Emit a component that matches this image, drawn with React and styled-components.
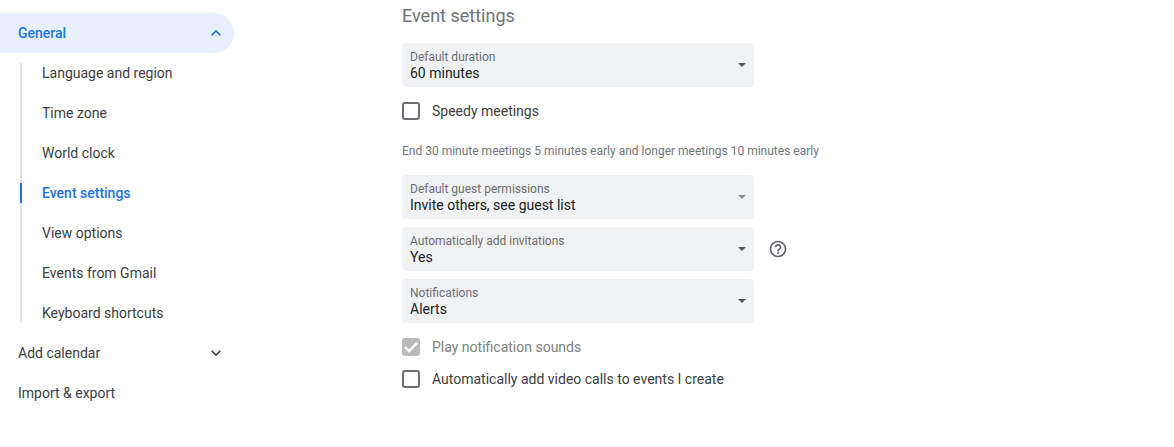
import React from 'react';
import styled, { createGlobalStyle } from 'styled-components';
import { MdExpandLess, MdExpandMore, MdHelpOutline } from 'react-icons/md';

const generalLinks = [
	'Language and region',
	'Time zone',
	'World clock',
	'Event settings',
	'View options',
	'Events from Gmail',
	'Keyboard shortcuts',
];

const SelectField = ({ id, label, options, dimArrow }) => (
	<Field>
		<FieldLabel htmlFor={id}>{label}</FieldLabel>
		<Select id={id}>
			{options.map(option => (
				<option key={option}>{option}</option>
			))}
		</Select>
		<Arrow viewBox="0 0 8 4" $dim={dimArrow} aria-hidden="true">
			<path d="M0 0h8L4 4z" />
		</Arrow>
	</Field>
);

const CheckRow = ({ id, label, ...input }) => (
	<CheckWrapper>
		<CheckBox>
			<CheckInput type="checkbox" id={id} {...input} />
			<svg viewBox="0 0 18 18" width="18" height="18" aria-hidden="true">
				<path d="M3 9.2l4 4 8-8.4" fill="none" stroke="currentColor" strokeWidth="2.4" />
			</svg>
		</CheckBox>
		<CheckLabel htmlFor={id} $disabled={input.disabled}>
			{label}
		</CheckLabel>
	</CheckWrapper>
);

const App = () => (
	<Page>
		<GlobalStyle />
		<Sidebar aria-label="Settings">
			<SectionButton type="button" aria-expanded="true" $active>
				General
				<MdExpandLess size={20} aria-hidden="true" />
			</SectionButton>
			<SubList>
				{generalLinks.map(name => (
					<li key={name}>
						<SubLink href="#" $active={name === 'Event settings'}>
							{name}
						</SubLink>
					</li>
				))}
			</SubList>
			<SectionButton type="button" aria-expanded="false">
				Add calendar
				<MdExpandMore size={20} aria-hidden="true" />
			</SectionButton>
			<SectionLink href="#">Import &amp; export</SectionLink>
		</Sidebar>
		<Main>
			<Title>Event settings</Title>
			<SelectField
				id="duration"
				label="Default duration"
				options={['60 minutes', '30 minutes', '15 minutes']}
			/>
			<CheckRow id="speedy" label="Speedy meetings" />
			<Hint>End 30 minute meetings 5 minutes early and longer meetings 10 minutes early</Hint>
			<SelectField
				id="permissions"
				label="Default guest permissions"
				options={['Invite others, see guest list', 'Modify event']}
				dimArrow
			/>
			<FieldRow>
				<SelectField
					id="invitations"
					label="Automatically add invitations"
					options={['Yes', 'No']}
				/>
				<HelpButton type="button" aria-label="Help">
					<MdHelpOutline size={20} />
				</HelpButton>
			</FieldRow>
			<SelectField id="notifications" label="Notifications" options={['Alerts', 'Off']} />
			<div>
				<CheckRow id="sounds" label="Play notification sounds" defaultChecked disabled />
				<CheckRow id="video" label="Automatically add video calls to events I create" />
			</div>
		</Main>
	</Page>
);

export default App;

const GlobalStyle = createGlobalStyle`
	* {
		box-sizing: border-box;
	}

	body {
		margin: 0;
		background: #fff;
		color: #3c4043;
		font: 14px/20px Roboto, sans-serif;
	}

	button,
	select {
		font: inherit;
		color: inherit;
	}
`;

const Page = styled.div`
	display: flex;
	gap: 168px;
`;

const Sidebar = styled.nav`
	flex: 0 0 234px;
	padding-top: 13px;
`;

const SectionButton = styled.button`
	display: flex;
	align-items: center;
	justify-content: space-between;
	width: 100%;
	height: 40px;
	padding: 0 8px 0 18px;
	border: 0;
	border-radius: 0 20px 20px 0;
	background: ${({ $active }) => ($active ? '#e8f0fe' : 'transparent')};
	color: ${({ $active }) => ($active ? '#1a73e8' : '#3c4043')};
	font-weight: ${({ $active }) => ($active ? 500 : 400)};
	cursor: pointer;
`;

const SectionLink = styled.a`
	display: block;
	padding: 10px 18px;
	color: #3c4043;
	text-decoration: none;
`;

const SubList = styled.ul`
	display: grid;
	gap: 20px;
	margin: 10px 0 10px 20px;
	padding: 0;
	list-style: none;
	box-shadow: inset 2px 0 #e4e4e4;
`;

const SubLink = styled.a`
	display: block;
	padding-left: 20px;
	border-left: 2px solid ${({ $active }) => ($active ? '#1a73e8' : 'transparent')};
	color: ${({ $active }) => ($active ? '#1a73e8' : '#3c4043')};
	font-weight: ${({ $active }) => ($active ? 500 : 400)};
	text-decoration: none;
`;

const Main = styled.main`
	display: grid;
	flex: 1;
	align-content: start;
	gap: 8px;
	padding: 3px 24px 24px 0;
`;

const Title = styled.h1`
	margin: 0 0 6px;
	color: #6f7377;
	font-size: 18px;
	font-weight: 400;
	line-height: 26px;
`;

const Field = styled.div`
	display: grid;
	width: 100%;
	max-width: 352px;

	> * {
		grid-area: 1 / 1;
	}
`;

const FieldLabel = styled.label`
	z-index: 1;
	align-self: start;
	padding: 6px 8px 0;
	color: #6b6e72;
	font-size: 12px;
	line-height: 16px;
	pointer-events: none;
`;

const Select = styled.select`
	width: 100%;
	height: 44px;
	padding: 20px 28px 4px 8px;
	border: 0;
	border-radius: 4px;
	background: #f1f2f3;
	color: #202124;
	line-height: 20px;
	appearance: none;
`;

const Arrow = styled.svg`
	place-self: center end;
	width: 8px;
	height: 4px;
	margin-right: 8px;
	fill: ${({ $dim }) => ($dim ? '#8b8d90' : '#55585c')};
	pointer-events: none;
`;

const FieldRow = styled.div`
	display: flex;
	align-items: center;
	gap: 14px;
`;

const HelpButton = styled.button`
	display: flex;
	padding: 0;
	border: 0;
	background: none;
	color: #5f6368;
	cursor: pointer;
`;

const CheckWrapper = styled.div`
	display: flex;
	align-items: center;
	gap: 12px;
	height: 32px;
`;

const CheckBox = styled.span`
	display: grid;

	> * {
		grid-area: 1 / 1;
	}

	svg {
		color: #fff;
		pointer-events: none;
		visibility: hidden;
	}

	input:checked + svg {
		visibility: visible;
	}
`;

const CheckInput = styled.input`
	width: 18px;
	height: 18px;
	margin: 0;
	border: 2px solid #6b6f74;
	border-radius: 3px;
	appearance: none;

	&:checked {
		border-color: #1a73e8;
		background: #1a73e8;
	}

	&:disabled {
		border-color: #bababa;
		background: #bababa;
	}
`;

const CheckLabel = styled.label`
	color: ${({ $disabled }) => ($disabled ? '#7d8084' : '#3c4043')};
`;

const Hint = styled.p`
	margin: 0;
	padding: 8px 0;
	color: #70757a;
	font-size: 12px;
	line-height: 16px;
`;
